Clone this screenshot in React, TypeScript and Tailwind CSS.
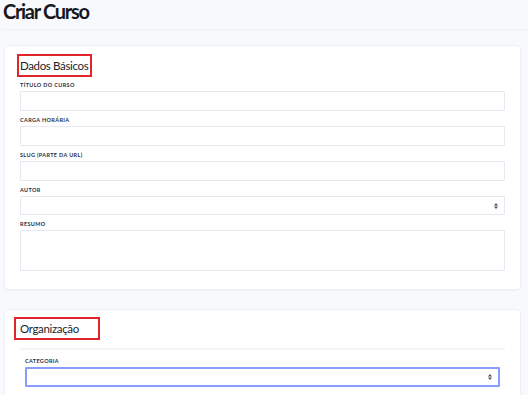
import React from "react";

function Arrows() {
  return (
    <svg width="4" height="6" viewBox="0 0 4 6" className="shrink-0">
      <path d="M2 0 L4 2.4 L0 2.4 Z" fill="#4b5160" />
      <path d="M2 6 L4 3.6 L0 3.6 Z" fill="#4b5160" />
    </svg>
  );
}

function Label({ children, className = "" }: { children: React.ReactNode; className?: string }) {
  return (
    <div className={"text-[5.5px] leading-[6px] font-bold uppercase tracking-[0.35px] text-[#2b3040] whitespace-nowrap " + className}>
      {children}
    </div>
  );
}

export default function App() {
  return (
    <div
      className="w-[528px] h-[395px] overflow-hidden bg-[#f8f9fc] text-[#1b1f2a]"
      style={{ fontFamily: "Lato, 'Open Sans', sans-serif" }}
    >
      <div className="ml-[3px] h-[30px] border-b border-[#eef0f6]">
        <h1 className="text-[20px] leading-[22px] font-bold tracking-[-1.3px] text-[#151821] whitespace-nowrap">Criar Curso</h1>
      </div>

      <div className="mt-[15px] ml-[4px] w-[517px] h-[245px] rounded-[4px] bg-white border border-[#edf0f6] shadow-[0_1px_2px_rgba(0,0,0,0.04)] px-[15px] pt-[8px]">
        <div className="-ml-[3px] w-[75px] h-[23px] border-2 border-[#e0252b] flex items-center pl-[1px] whitespace-nowrap">
          <span className="text-[11.5px] leading-[14px] tracking-[-0.35px] text-[#1b1f2a]">Dados Básicos</span>
        </div>
        <Label className="mt-[5px]">Título do curso</Label>
        <div className="mt-[3px] h-[20px] border border-[#e6e9f1] rounded-[1px]" />
        <Label className="mt-[6px]">Carga horária</Label>
        <div className="mt-[3px] h-[20px] border border-[#e6e9f1] rounded-[1px]" />
        <Label className="mt-[6px]">Slug (parte da URL)</Label>
        <div className="mt-[3px] h-[20px] border border-[#e6e9f1] rounded-[1px]" />
        <Label className="mt-[6px]">Autor</Label>
        <div className="mt-[3px] h-[19px] border border-[#e6e9f1] rounded-[1px] flex items-center justify-end pr-[6px]">
          <Arrows />
        </div>
        <Label className="mt-[6px]">Resumo</Label>
        <div className="mt-[3px] h-[41px] border border-[#e6e9f1] rounded-[1px]" />
      </div>

      <div className="mt-[19px] ml-[4px] w-[517px] h-[120px] rounded-[4px] bg-white border border-[#edf0f6] px-[15px] pt-[7px]">
        <div className="-ml-[6px] w-[86px] h-[23px] border-2 border-[#e0252b] flex items-center pl-[4px] whitespace-nowrap">
          <span className="text-[11.5px] leading-[14px] tracking-[-0.35px] text-[#1b1f2a]">Organização</span>
        </div>
        <div className="mt-[8px] h-[2px] bg-[#f3f4f8]" />
        <div className="px-[5px]">
          <Label className="mt-[8px]">Categoria</Label>
          <div className="mt-[3px] h-[20px] border-2 border-[#8b9cff] rounded-[1px] flex items-center justify-end pr-[6px]">
            <Arrows />
          </div>
        </div>
      </div>
    </div>
  );
}
